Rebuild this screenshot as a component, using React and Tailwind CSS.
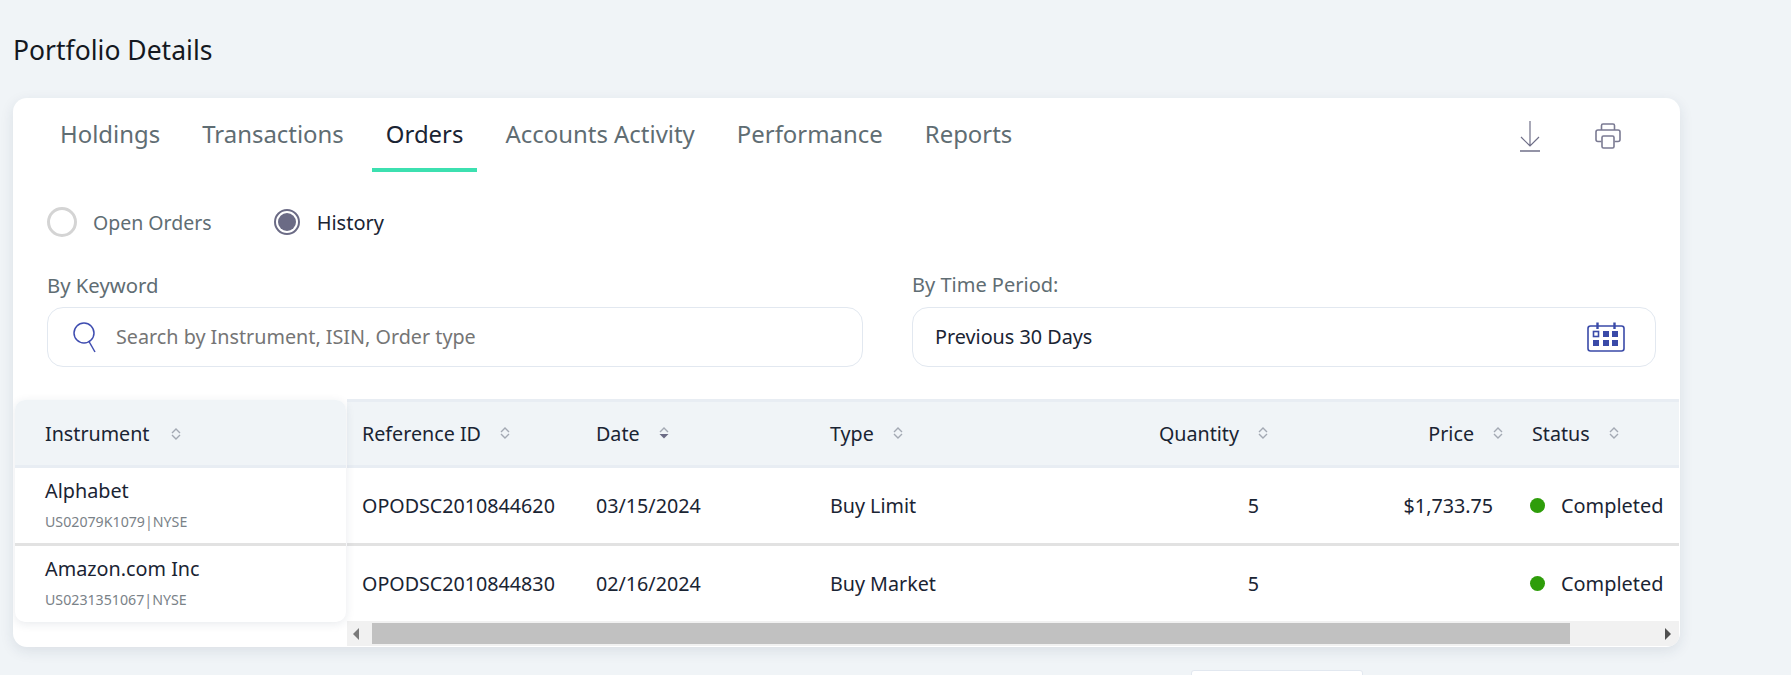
import React from 'react'

const font = { fontFamily: '"Noto Sans", sans-serif' }

const SortIcon = ({ active, wide }) => (
  <svg width="10" height="12" viewBox="0 0 10 12" className={`shrink-0 ${wide ? 'ml-[22px]' : 'ml-[19px]'}`}>
    <path d="M1 5 L5 1 L9 5" fill="none" stroke="#a3a9b3" strokeWidth="1.4" />
    {active ? (
      <path d="M0.5 7 L5 11.5 L9.5 7 Z" fill="#6b6b85" />
    ) : (
      <path d="M1 7 L5 11 L9 7" fill="none" stroke="#a3a9b3" strokeWidth="1.4" />
    )}
  </svg>
)

const Tab = ({ label, active }) => (
  <div
    className={`h-[74px] px-[14px] pt-[20px] border-b-4 text-[23.93px] leading-[32px] ${
      active ? 'border-[#3ce0b0] text-[#1a2433]' : 'border-transparent text-[#5f6d73]'
    }`}
  >
    {label}
  </div>
)

const rows = [
  {
    name: 'Alphabet',
    sub: 'US02079K1079|NYSE',
    ref: 'OPODSC2010844620',
    date: '03/15/2024',
    type: 'Buy Limit',
    qty: '5',
    price: '$1,733.75',
  },
  {
    name: 'Amazon.com Inc',
    sub: 'US0231351067|NYSE',
    ref: 'OPODSC2010844830',
    date: '02/16/2024',
    type: 'Buy Market',
    qty: '5',
    price: '',
  },
]

const gridCols = 'grid grid-cols-[234px_234px_185px_285px_232px_162px]'

export default function App() {
  return (
    <div style={font} className="h-[675px] w-full overflow-hidden bg-[#f0f4f7] text-[#1a2433]">
      <h1 className="pl-[13px] pt-[32px] h-[98px] text-[26.5px] leading-[36px] font-normal text-[#14181f]">
        Portfolio Details
      </h1>

      {/* Card */}
      <div className="ml-[13px] w-[1667px] h-[549px] rounded-[14px] bg-white shadow-[0_4px_14px_rgba(30,50,80,0.1)] overflow-hidden">
        {/* Tabs */}
        <div className="flex items-start pl-[33px] h-[74px]">
          <div className="flex gap-[14px]">
            <Tab label="Holdings" />
            <Tab label="Transactions" />
            <Tab label="Orders" active />
            <Tab label="Accounts Activity" />
            <Tab label="Performance" />
            <Tab label="Reports" />
          </div>
          <div className="ml-auto flex items-start pt-[23px] pr-[59px]">
            <svg width="22" height="31" viewBox="0 0 22 31" fill="none" stroke="#6f6f88" strokeWidth="1.2">
              <path d="M11 0 V24 M2 16 L11 25 L20 16" />
              <path d="M1 30 H21" strokeWidth="1.6" />
            </svg>
            <svg width="26" height="26" viewBox="0 0 26 26" fill="none" stroke="#7a7a92" strokeWidth="1.6" className="ml-[54px] mt-[2px]">
              <path d="M6.5 7 V2.5 a1.5 1.5 0 0 1 1.5 -1.5 H18 a1.5 1.5 0 0 1 1.5 1.5 V7" />
              <path d="M6.5 18.5 H3 a2 2 0 0 1 -2 -2 V9 a2 2 0 0 1 2 -2 H23 a2 2 0 0 1 2 2 V16.5 a2 2 0 0 1 -2 2 H19.5" />
              <rect x="7" y="13" width="12" height="12" rx="1.5" />
            </svg>
          </div>
        </div>

        {/* Radios */}
        <div className="ml-[34px] mt-[35px] flex items-center h-[30px] text-[20px]">
          <span className="w-[30px] h-[30px] rounded-full border-[3px] border-[#d4d4d4] bg-white" />
          <span className="ml-[16px] mt-[1px] text-[19.5px] text-[#5f6d73]">Open Orders</span>
          <span className="ml-[62px] w-[26px] h-[26px] rounded-full border-2 border-[#6b6b85] p-[2px]">
            <span className="block w-full h-full rounded-full bg-[#6b6b85]" />
          </span>
          <span className="ml-[17px] mt-[1px] text-[#1a2433]">History</span>
        </div>

        {/* Filters */}
        <div className="ml-[34px] mt-[34px] flex gap-[49px]">
          <div className="w-[816px]">
            <div className="text-[20.3px] leading-[28px] text-[#5f6d73] mb-[8px]">By Keyword</div>
            <div className="flex items-center h-[60px] rounded-[16px] border border-[#e2e8f0] pl-[25px]">
              <svg width="24" height="31" viewBox="0 0 24 31" fill="none" stroke="#3f4db0" strokeWidth="1.5">
                <circle cx="11" cy="11" r="10" />
                <path d="M16 19.5 L22 30" />
              </svg>
              <span className="ml-[19px] text-[19.75px] text-[#757575]">Search by Instrument, ISIN, Order type</span>
            </div>
          </div>
          <div className="w-[744px]">
            <div className="text-[20px] leading-[28px] text-[#5f6d73] mb-[8px]">By Time Period:</div>
            <div className="flex items-center justify-between h-[60px] rounded-[16px] border border-[#e2e8f0] pl-[22px] pr-[30px]">
              <span className="text-[19.8px] text-[#1a2433]">Previous 30 Days</span>
              <svg width="38" height="30" viewBox="0 0 38 30" fill="none">
                <rect x="1" y="4" width="36" height="25" rx="2.5" stroke="#3a4aa8" strokeWidth="1.6" />
                <path d="M10.5 0.5 V7 M27.5 0.5 V7" stroke="#3a4aa8" strokeWidth="2.4" />
                <rect x="6.5" y="9.5" width="5" height="5" stroke="#3a4aa8" strokeWidth="1.6" />
                <rect x="16" y="9" width="6" height="6" fill="#3a4aa8" />
                <rect x="25" y="9" width="6" height="6" fill="#3a4aa8" />
                <rect x="6" y="18" width="6" height="6" fill="#3a4aa8" />
                <rect x="16" y="18" width="6" height="6" fill="#3a4aa8" />
                <rect x="25" y="18" width="6" height="6" fill="#3a4aa8" />
              </svg>
            </div>
          </div>
        </div>

        {/* Table */}
        <div className="mt-[32px] flex items-start">
          {/* Pinned column */}
          <div className="relative z-10 ml-[2px] mr-[1px] mt-[1px] w-[331px] rounded-[10px] bg-white shadow-[0_2px_10px_rgba(30,50,80,0.1)] overflow-hidden">
            <div className="flex items-center h-[68px] pl-[30px] pt-[3px] bg-[#f0f4f7] border-b-[3px] border-[#e8edf3] text-[19.7px]">
              Instrument
              <SortIcon wide />
            </div>
            {rows.map((r, i) => (
              <div
                key={r.name}
                className={`pl-[30px] pt-[8px] ${i === 0 ? 'h-[78px] border-b-[3px] border-[#e2e2e2]' : 'h-[76px]'}`}
              >
                <div className="text-[19.8px] leading-[30px]">{r.name}</div>
                <div className="mt-[5px] text-[14.2px] leading-[22px] text-[#7a8288]">{r.sub}</div>
              </div>
            ))}
          </div>

          <div className="w-[1332px]">
            <div className={`${gridCols} h-[69px] items-center bg-[#f0f4f7] border-y-[3px] border-[#e8edf3] text-[19.7px]`}>
              <div className="flex items-center pl-[15px]">Reference ID<SortIcon /></div>
              <div className="flex items-center pl-[15px]">Date<SortIcon active /></div>
              <div className="flex items-center pl-[15px]">Type<SortIcon /></div>
              <div className="flex items-center justify-end pr-[17px]">Quantity<SortIcon /></div>
              <div className="flex items-center justify-end pr-[14px]">Price<SortIcon /></div>
              <div className="flex items-center pl-[15px]">Status<SortIcon /></div>
            </div>
            {rows.map((r, i) => (
              <div
                key={r.ref}
                className={`${gridCols} items-center text-[19.7px] ${i === 0 ? 'h-[78px] border-b-[3px] border-[#e2e2e2]' : 'h-[75px]'}`}
              >
                <div className="pl-[15px]">{r.ref}</div>
                <div className="pl-[15px]">{r.date}</div>
                <div className="pl-[15px]">{r.type}</div>
                <div className="text-right pr-[26px]">{r.qty}</div>
                <div className="text-right pr-[24px]">{r.price}</div>
                <div className="flex items-center pl-[13px]">
                  <span className="w-[15px] h-[15px] rounded-full bg-[#2e9d0a]" />
                  <span className="ml-[16px] text-[19.9px]">Completed</span>
                </div>
              </div>
            ))}
            {/* Scrollbar */}
            <div className="flex items-center h-[25px] pl-[6px] pr-[8px] bg-[#f1f1f1]">
              <span className="w-0 h-0 border-y-[6px] border-y-transparent border-r-[6px] border-r-[#7a7a7a]" />
              <div className="ml-[13px] w-[1198px] h-[21px] bg-[#c1c1c1]" />
              <span className="ml-auto w-0 h-0 border-y-[6px] border-y-transparent border-l-[6px] border-l-[#505050]" />
            </div>
          </div>
        </div>
      </div>

      {/* Pagination box, cut off by the window */}
      <div className="ml-[1191px] mt-[23px] w-[172px] h-[30px] rounded-t-[3px] bg-white border border-[#e2e8f0]" />
    </div>
  )
}
